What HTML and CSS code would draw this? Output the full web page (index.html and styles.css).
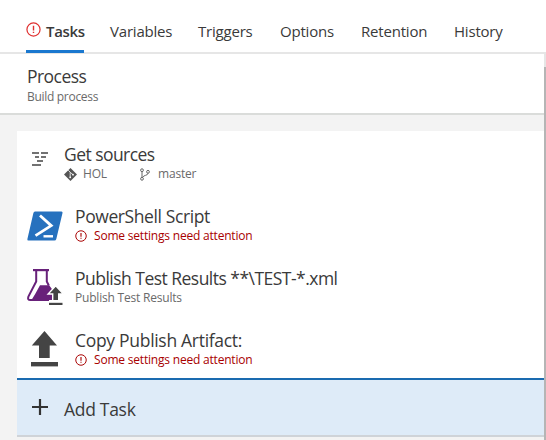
FILE: index.html
```html
<!DOCTYPE html>
<html lang="en">
<head>
<meta charset="utf-8">
<title>Build definition</title>
<link rel="stylesheet" href="styles.css">
</head>
<body>
<svg class="defs" width="0" height="0">
  <symbol id="alert" viewBox="0 0 16 16">
    <circle cx="8" cy="8" r="7" fill="none" stroke="currentColor" stroke-width="1.3"/>
    <path d="M8 4v5M8 10.3v1.5" stroke="currentColor" stroke-width="1.5"/>
  </symbol>
</svg>
<nav class="tabs">
  <a class="tab active"><svg class="tab-alert"><use href="#alert"/></svg><span>Tasks</span></a>
  <a class="tab">Variables</a>
  <a class="tab">Triggers</a>
  <a class="tab">Options</a>
  <a class="tab">Retention</a>
  <a class="tab">History</a>
</nav>
<main class="content">
  <div class="pane">
    <header class="process">
      <div class="title tight">Process</div>
      <div class="sub">Build process</div>
    </header>
    <section class="list">
      <div class="row sources">
        <div class="icon">
          <svg width="16" height="14" viewBox="0 0 16 14"><path d="M0 1h7M9 1h7M3 5h4M9 5h5M5 9h6M0 13h9" stroke="#444" stroke-width="1.5"/></svg>
        </div>
        <div class="text">
          <div class="title tight">Get sources</div>
          <div class="sub meta">
            <svg width="13" height="13" viewBox="0 0 13 13"><path d="M6.5 0L13 6.5 6.5 13 0 6.5z" fill="#555"/><path d="M4.2 2.2l2 2v5M6.4 4.4l2.7 2.4" fill="none" stroke="#fff" stroke-width=".8"/><circle cx="6.2" cy="9.3" r=".9" fill="#fff"/><circle cx="9" cy="6.7" r=".9" fill="#fff"/></svg>
            <span class="repo">HOL</span>
            <svg width="10" height="13" viewBox="0 0 10 13" fill="none" stroke="#666"><circle cx="2" cy="2.2" r="1.4"/><circle cx="2" cy="10.8" r="1.4"/><circle cx="8" cy="3.8" r="1.4"/><path d="M2 3.6v5.8M8 5.2c0 2.6-4.5 1.6-5.5 4.3"/></svg>
            <span class="branch">master</span>
          </div>
        </div>
      </div>
      <div class="row">
        <div class="icon ps">
          <svg width="36" height="30" viewBox="0 0 36 30"><path d="M8 .5h26.5q1.4 0 1 1.6l-6.2 25.8q-.4 1.6-1.8 1.6H1.4q-1.4 0-1-1.6L6.4 2.1Q6.8.5 8 .5z" fill="#2671be"/><path d="M13 4.5L24.2 14.6 8.5 24.6" fill="none" stroke="#fff" stroke-width="2.8"/><path d="M16.5 25.3H26" stroke="#fff" stroke-width="2.4"/></svg>
        </div>
        <div class="text">
          <div class="title">PowerShell Script</div>
          <div class="sub warn"><svg><use href="#alert"/></svg><span>Some settings need attention</span></div>
        </div>
      </div>
      <div class="row">
        <div class="icon flask">
          <svg width="36" height="37" viewBox="0 0 36 37"><path d="M6 1.1h16" stroke="#68217a" stroke-width="2.2"/><path d="M9.2 2v10.5L1.4 27.6Q.2 31 3.4 31H22M19.8 2v10.5l2 4" fill="none" stroke="#68217a" stroke-width="2"/><path d="M13 16.2h9.2l3.6 5V31H4.5l3.7-6z" fill="#68217a"/><path d="M28.7 16.8L36.4 25h-4.7v6.8h-6V25h-4.6z" fill="#444" stroke="#fff" stroke-width="1.4"/><path d="M22 34.9h13.5" stroke="#444" stroke-width="2.2"/></svg>
        </div>
        <div class="text">
          <div class="title tighter">Publish Test Results **\TEST-*.xml</div>
          <div class="sub">Publish Test Results</div>
        </div>
      </div>
      <div class="row last">
        <div class="icon upload">
          <svg width="27" height="36" viewBox="0 0 27 36"><path d="M13.5 0L26 14.6h-7.3V27H8V14.6H.8z" fill="#444"/><path d="M0 33.2h27" stroke="#444" stroke-width="4.4"/></svg>
        </div>
        <div class="text">
          <div class="title wide">Copy Publish Artifact:</div>
          <div class="sub warn"><svg><use href="#alert"/></svg><span>Some settings need attention</span></div>
        </div>
      </div>
      <div class="add">
        <svg width="16" height="16" viewBox="0 0 16 16"><path d="M8 0v16M0 8h16" stroke="#333" stroke-width="2.2"/></svg>
        <span class="title wide">Add Task</span>
      </div>
    </section>
  </div>
  <div class="scroll"><div class="thumb"></div></div>
</main>
</body>
</html>
```
FILE: styles.css
```css
* { box-sizing: border-box; }
body {
  margin: 0;
  width: 546px;
  height: 440px;
  overflow: hidden;
  background: #fff;
  color: #3a3a3a;
  font-family: "Open Sans", "Noto Sans", sans-serif;
}
.defs { display: block; }
.tabs {
  display: grid;
  grid-template-columns: 84px 88px 82px 81px 93px 1fr;
  height: 54px;
  padding-left: 26px;
  border-bottom: 2px solid #e6e6e6;
}
.tab {
  font-size: 15px;
  line-height: 20px;
  padding-top: 21px;
  white-space: nowrap;
  letter-spacing: -0.2px;
}
.active {
  display: flex;
  gap: 5px;
  width: 58px;
  height: 53px;
  font-weight: 600;
  letter-spacing: -0.3px;
  border-bottom: 3px solid #1a78cf;
}
.tab-alert { width: 15px; height: 15px; margin-top: 1px; color: #e03131; flex: none; }
.content { display: flex; height: 386px; }
.pane { width: 544px; background: #f3f3f3; }
.process {
  height: 61px;
  padding: 10px 0 0 27px;
  background: #fff;
  border-bottom: 2px solid #dadcda;
}
.process .sub { margin-top: 1px; letter-spacing: -0.3px; }
.title { font-size: 17.5px; line-height: 24px; letter-spacing: -0.4px; white-space: nowrap; }
.tight { letter-spacing: -0.55px; }
.tighter { letter-spacing: -0.52px; }
.wide { letter-spacing: -0.3px; }
.sub { font-size: 12px; line-height: 16px; color: #6a6a6a; letter-spacing: -0.2px; white-space: nowrap; }
.list { margin: 16px 0 0 17px; background: #fff; }
.row { display: flex; height: 62px; padding-top: 11px; }
.icon { width: 58px; flex: none; }
.icon svg { display: block; overflow: visible; }
.sources .icon { width: 47px; padding: 10px 0 0 15px; }
.ps { padding: 7px 0 0 10px; }
.flask { padding: 3px 0 0 10px; }
.upload { padding: 3px 0 0 14px; }
.meta, .warn { display: flex; align-items: center; }
.meta .repo { width: 63px; padding-left: 6px; }
.meta .branch { padding-left: 8px; }
.warn { color: #a80000; }
.warn svg { width: 12px; height: 12px; margin-right: 7px; }
.last { height: 61px; }
.add {
  display: flex;
  align-items: center;
  height: 59px;
  padding: 2px 0 0 15px;
  gap: 16px;
  background: #deebf8;
  border-top: 2px solid #1a6bb0;
  border-bottom: 2px solid #cfd3d8;
}
.add svg { margin-bottom: 4px; }
.scroll { width: 2px; padding-top: 13px; background: #e6e6e6; }
.thumb { height: 373px; background: #b5b5b5; }
```
